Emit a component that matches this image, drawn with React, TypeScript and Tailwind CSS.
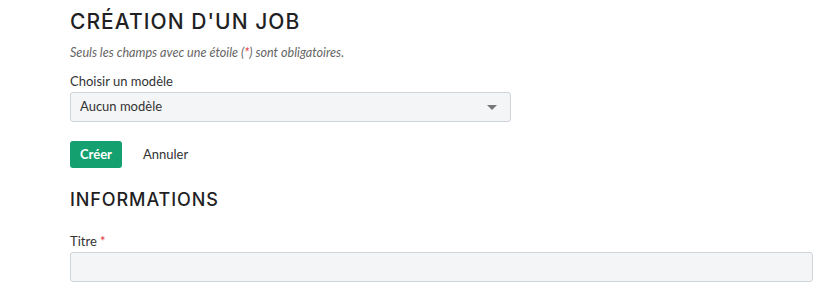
export default function App() {
  return (
    <div className="min-h-screen bg-white px-[70px] pt-[8px] text-[#333]" style={{ fontFamily: "Lato, 'Noto Sans', sans-serif" }}>
      <h1 className="text-[21px] font-medium leading-[28px] tracking-[0.05em] text-[#1f1f24] font-['Inter',sans-serif]">
        CRÉATION D'UN JOB
      </h1>
      <p className="mt-[9px] text-[12.6px] italic leading-[16px] text-[#666]">
        Seuls les champs avec une étoile (<span className="text-[#e0303a]">*</span>) sont obligatoires.
      </p>

      <label className="mt-[12px] block text-[13px] leading-[16px] text-[#333]">Choisir un modèle</label>
      <div className="mt-[3px] flex h-[30px] w-[441px] items-center justify-between rounded-[3px] border border-[#cfd3da] bg-[#f4f5f7] pl-[9px] pr-[13px]">
        <span className="text-[13px] text-[#333]">Aucun modèle</span>
        <svg width="10" height="5" viewBox="0 0 10 5" className="fill-[#777]">
          <path d="M0 0h10L5 5z" />
        </svg>
      </div>

      <div className="mt-[19px] flex items-center gap-[21px]">
        <button className="h-[27px] w-[52px] rounded-[3px] bg-[#14a06f] text-[13px] font-bold text-white">Créer</button>
        <span className="text-[13px] text-[#333]">Annuler</span>
      </div>

      <h2 className="mt-[20px] text-[18px] font-medium leading-[24px] tracking-[0.05em] text-[#1f1f24] font-['Inter',sans-serif]">
        INFORMATIONS
      </h2>

      <label className="mt-[21px] block text-[13px] leading-[16px] text-[#333]">
        Titre <span className="text-[#e0303a]">*</span>
      </label>
      <div className="mt-[3px] h-[30px] w-[743px] rounded-[3px] border border-[#cfd3da] bg-[#f4f5f7]" />
    </div>
  );
}
